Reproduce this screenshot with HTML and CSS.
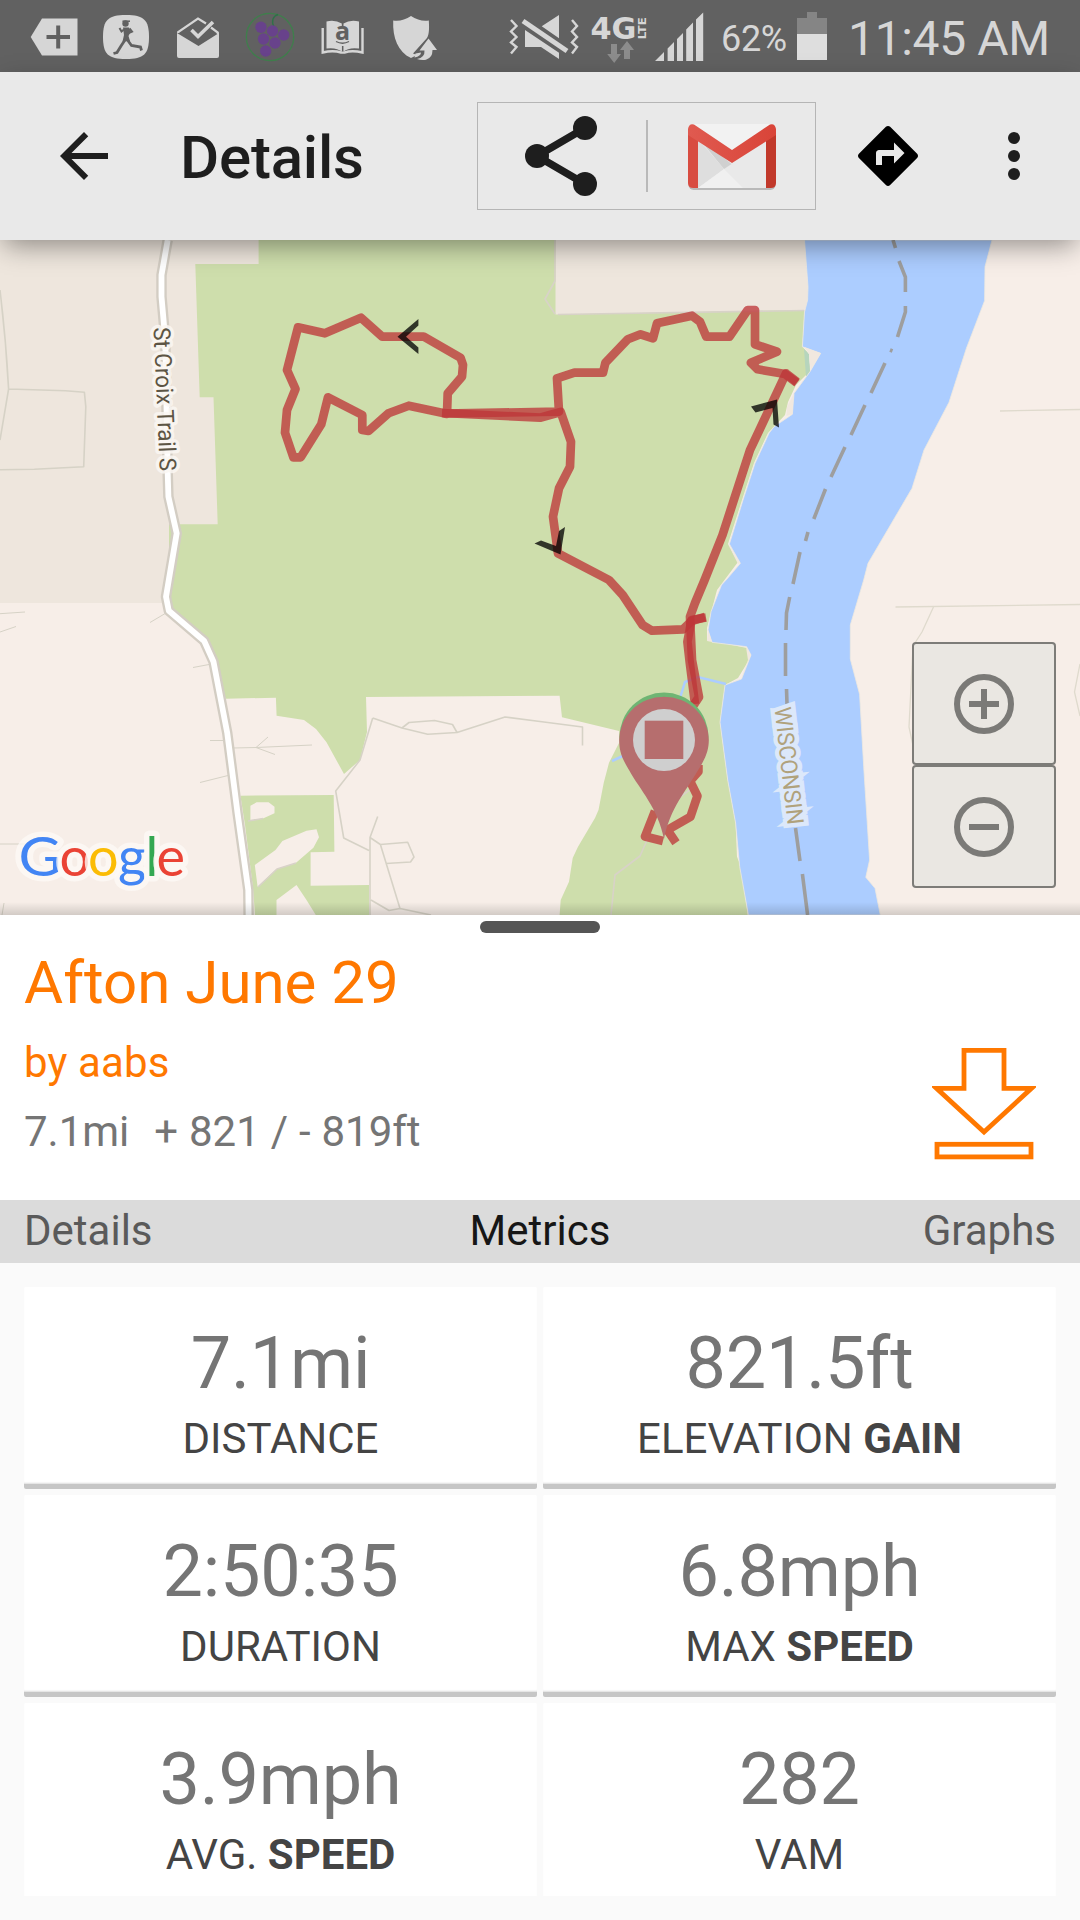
FILE: index.html
```html
<!DOCTYPE html>
<html lang="en">
<head>
<meta charset="utf-8">
<title>Afton June 29</title>
<link rel="stylesheet" href="styles.css">
</head>
<body>
<div class="screen">
  <header class="status">
    <svg class="s-tag" width="48" height="72" viewBox="30 0 48 72"><path fill="#d6d6d6" d="M30.700 37 42 18.500H77.500V55.500H42Z"/><path d="M46.500 37H70M58.200 25.500V48.500" stroke="#616161" stroke-width="4"/></svg>
    <svg class="s-run" width="47" height="72" viewBox="103 0 47 72"><path d="M126 15C144 15 149 20 149 37S144 59 126 59 103 54 103 37 108 15 126 15Z" fill="#d6d6d6"/><circle cx="125.500" cy="23.500" r="3.200" fill="#616161"/><path d="M122.500 21.200H130" stroke="#616161" stroke-width="1.500"/><path d="M123 27.500 129 27.500 130.500 32 128.500 36 130 41 122.500 41.500 124 35Z" fill="#616161"/><path d="M124 29.500 121.500 31.500 119.500 28M129.500 28.500 132 31.500 127.500 33.500" fill="none" stroke="#616161" stroke-width="2"/><path d="M125 40 121 46 117 52.500 113.500 53.500M127.500 40 131.500 45.500 140.500 47 141.500 50.500" fill="none" stroke="#616161" stroke-width="2.800"/></svg>
    <svg class="s-inbox" width="43" height="72" viewBox="177 0 43 72"><path d="M178.200 33V32L198 18.500 206 23.500M211 27.500 217.800 32.500V34" fill="none" stroke="#d6d6d6" stroke-width="2.200"/><path d="M177 33 198.500 46 219 33V56Q219 58 217 58H179Q177 58 177 56Z" fill="#d6d6d6"/><path d="M191.500 30 198 36.500 213 22" fill="none" stroke="#d6d6d6" stroke-width="3.600"/></svg>
    <svg class="s-grape" width="50" height="72" viewBox="245 0 50 72"><circle cx="270" cy="37" r="23.700" fill="none" stroke="#3f7f4c" stroke-width="1.300"/><path d="M274 27C271 21 273 16 278 14.500" fill="none" stroke="#2f7149" stroke-width="1.400"/><g fill="#68428b"><circle cx="261" cy="27.300" r="5.700"/><circle cx="272.500" cy="31" r="5.700"/><circle cx="283.700" cy="35" r="5.700"/><circle cx="263.500" cy="39" r="5.700"/><circle cx="275" cy="43" r="5.700"/><circle cx="265.700" cy="51" r="5.700"/></g></svg>
    <svg class="s-book" width="44" height="72" viewBox="321 0 44 72"><path d="M322.700 28V52.500Q333 50 341 52.500H344.500Q352 50 362.500 52.500V28" fill="none" stroke="#d6d6d6" stroke-width="2.400"/><path d="M326.500 21.500Q335 19.500 341.800 23.500V26H343.500V23.500Q350 19.500 359 21.500V48.500Q349 47 342.700 52 336 47 326.500 48.500Z" fill="#d6d6d6"/><path d="M342.700 46V51.500" stroke="#616161" stroke-width="1.500"/><text x="342.500" y="40" text-anchor="middle" class="amazon">a</text><path d="M336 41.500Q342.500 45 349 41.500" fill="none" stroke="#616161" stroke-width="1.300"/></svg>
    <svg class="s-shield" width="45" height="72" viewBox="393 0 45 72"><path d="M393.200 20.500Q402 22 411 16 420 22 428.800 20.500C429.300 28 429.300 34 427 38L413 53.500 417 55 411 58C398 52 392.500 38 393.200 20.500Z" fill="#d6d6d6"/><path d="M417 59Q421 60.300 426 59.700 432.500 58 432.500 50H437L428.500 38.500 419.500 50.500H424.500Q425 57.500 417 59ZM415.500 53.500 421 52.500Q421 56 414.500 57.500Z" fill="#d6d6d6"/></svg>
    <svg class="s-mute" width="70" height="72" viewBox="509 0 70 72"><g fill="none" stroke="#d6d6d6" stroke-width="2.400"><path d="M511 20 516.500 26 511 31.500 516.500 37 511 42.500 516.500 47 511 53.500M572 20 577 26 572 31.500 577 37 572 42.500 577 47 572 53.500"/></g><path d="M525 30V47H541L559 59V52.800ZM559 15V38.300L541.700 26.300Z" fill="#d6d6d6"/><path d="M523 21 567 51" stroke="#d6d6d6" stroke-width="5"/></svg>
    <svg class="s-4g" width="56" height="72" viewBox="591 0 56 72"><text class="fourg" x="590.500" y="39" textLength="46" lengthAdjust="spacingAndGlyphs">4G</text><text class="lte" transform="translate(645.500 39.500) rotate(-90)" textLength="22.500" lengthAdjust="spacingAndGlyphs">LTE</text><path fill="#8c8c8c" d="M611 44H617V54H621L614.200 63 607.200 54H611ZM624 59V50H620L627 41 634 50H630V59Z"/></svg>
    <svg class="s-signal" width="49" height="72" viewBox="655 0 49 72"><path fill="#d6d6d6" d="M655 61 664 52V61ZM667.600 48.500 674 42V61H667.600ZM677 39 683 33V61H677ZM686.200 29.500 693 22.500V61H686.200ZM696 19.500 703.200 12.500V61H696Z"/></svg>
    <span class="percent">62%</span>
    <svg class="s-batt" width="31" height="72" viewBox="797 0 31 72"><path fill="#858585" d="M807 12H817V18H827V60H797V18H807Z"/><path fill="#dedede" d="M797 34H827V60H797Z"/></svg>
    <span class="time">11:45 AM</span>
  </header>

  <nav class="appbar">
    <svg class="back" width="72" height="72" viewBox="0 0 24 24"><path fill="#1e1e1e" d="M20 11H7.830l5.590-5.590L12 4l-8 8 8 8 1.410-1.410L7.830 13H20v-2z"/></svg>
    <h1 class="bar-title">Details</h1>
    <div class="share-box">
      <svg width="168" height="106" viewBox="478 103 168 106"><path d="M585 128 537 156 585 184" fill="none" stroke="#1e1e1e" stroke-width="7.500"/><g fill="#1e1e1e"><circle cx="537" cy="156" r="12"/><circle cx="585" cy="128" r="12"/><circle cx="585" cy="184" r="12"/></g></svg>
      <i class="share-divider"></i>
      <svg width="167" height="106" viewBox="648 103 167 106">
        <defs><linearGradient id="red" x1="0" x2="1"><stop offset="0" stop-color="#e05a50"/><stop offset="1" stop-color="#d94438"/></linearGradient></defs>
        <rect x="688.500" y="126" width="87" height="64" rx="5" fill="#b9b9b9"/>
        <rect x="688" y="124" width="88" height="64" rx="5" fill="#e9e9e9"/>
        <path fill="#d0d0d0" d="M697 136 731.500 164 724 169Z"/><path fill="#dedede" d="M697 138 724 169 698 188Z"/><path fill="#f0f0f0" d="M698 188 724 169 743 188Z"/>
        <path fill="#f2f2f2" d="M692 124H772L732 153Z"/>
        <path fill="#d84c41" d="M688 130 698 138V188H693Q688 188 688 183Z"/><path fill="#c1392b" d="M776 130 766 138V188H771Q776 188 776 183Z"/>
        <path fill="url(#red)" d="M688 135V129Q689 123 694 124.500L732 150 770 124.500Q775 123 776 129V135L732 163Z"/>
      </svg>
    </div>
    <svg class="directions" width="72" height="72" viewBox="0 0 24 24"><path d="M21.710 11.290l-9-9c-.39-.39-1.020-.39-1.410 0l-9 9c-.39.39-.39 1.020 0 1.410l9 9c.39.39 1.020.39 1.410 0l9-9c.39-.38.39-1.010 0-1.410zM14 14.500V12h-4v3H8v-4c0-.55.45-1 1-1h5V7.500l3.500 3.500-3.500 3.500z"/></svg>
    <svg class="more" width="12" height="48" viewBox="0 0 12 48"><g fill="#1e1e1e"><circle cx="6" cy="6" r="6"/><circle cx="6" cy="24" r="6"/><circle cx="6" cy="42" r="6"/></g></svg>
  </nav>

  <main class="map">
    <svg class="map-art" width="1080" height="675" viewBox="0 240 1080 675">
      <rect y="240" width="1080" height="675" fill="#f7eee8"/>
      <!-- shaded land blocks -->
      <path fill="#eee6dd" d="M0 240H260V530H180L170 603H0ZM555 240H810V320H555Z"/>
      <!-- park -->
      <path fill="#cedeac" d="M258.600 240V264H195.300L199.700 397.300H213.500L217.700 524.300H169V545L169 610 205 640 213.500 662 225.600 698.700 275.900 697.700 276.600 715.700 304 720 316 729 326.500 742.300 344 774 360 760 367 732 366 697 559.600 695.700 562 717.300 619 731V743L609 762.700 603.700 783 598.500 810 595 818 578 846.700 572.700 858 569 881.700 560.700 900 559.600 915H747.700L741.500 868 737 856.700 735.600 823 727.700 780 720 722 725 685 738 678 749 660 747 648 707 640 707 628 717 590 738 562 728 544 742 500 754 463 768 433 785 415 788 402 796 385 810 371 808 353 802.400 346.700 804.500 310 555.500 314.500V240Z"/>
      <path fill="#cedeac" fill-rule="evenodd" d="M240.400 795.700 333.700 795 334.400 851.700 310.600 852.300V885.700L369 885V915H255L253 888 245 825ZM250.400 805.700V820.700L263.500 818.300 274.500 813.300V806.700L268.600 802.300H256.600ZM254.800 865 257.600 886.700 276.500 869 295.500 863.300 313.400 847.700 319 837.300 316.500 829.300 306.500 830.700 282.400 841 275.500 850ZM276.500 900V915H315.800L306.500 900 296.500 885Z"/>
      <!-- river and its banks -->
      <path fill="#b6d5bd" d="M804 349 809 354 810 372 806 377Z"/>
      <path fill="#accdff" stroke="#eee9df" stroke-width=".8" d="M804.500 240 808 286.700 807.600 300 804.500 312 802.400 346.700 820.700 353.300 810 371.700 794 393.300 792.400 414.300 774 426.700 769 433.300 755 463.300 743 500 729.400 544 740.400 563.300 727 579 721.500 585 711 611.700 708 630 712 642.300 746.600 646.700 751 655 741.500 679 725 685 720 722.300 727.700 780 735.600 823 739.700 866.700 748.400 915H880.300L875 888.300 865.800 877.300 869.600 860 863.700 766.700 859.600 694.300 850.300 659V625L863.700 580 868 563.300 912 488.300 924 450 949 402.300 966.400 348.300 984.600 300.700 985 266.700 992 240Z"/>
      <path fill="#f1e8df" d="M804 347 820.700 353.300 810.500 370 809 354ZM793.500 394 787 407 786.500 416 792.400 414ZM708 630 707 641 712 642ZM746 647 751 655 741 678 748 660ZM728 544 740 563 738 564Z"/>
      <path fill="none" stroke="#accdff" stroke-width="2.500" d="M726 684 698 677 685 682 680 698M612 761 625 755"/>
      <!-- small roads -->
      <g fill="none" stroke="#d6d2c6" stroke-width="1.600" stroke-linejoin="round">
        <path d="M0 290Q6 340 8.600 389L0 440M8.600 389 65.400 390.700 84.400 392.300 85.800 406.700 83.700 466.700 34.400 469.300 0 469.700"/>
        <path stroke-width="1" d="M0 613.700 25 612M0 632 16 626.500M150 622.500 166 613M193 667.500 209 664.500M210 740.500H225M200 782.500 228 775.500M233 748 256 747.500 312 745M268 737 256 747.500 275 754.500M0 844H26M4 903 2 915"/>
        <path d="M372.700 718 360 760 335.700 791 343.700 838 369 850.500M372.700 718 402 728 409 722.500 434.500 720.500 452.500 724.500 457 732.500 427.700 734.300 402 728M457 732.500 505 717 540 721.500 582.500 727V745.500M377.700 816.500 370 837.500 380.400 844.500 407.700 842.300 414 857 410.500 862 386 863.500M370 837.500V915M380.400 844.500 400 908.500 389 910.500 371 900M400 908.500 431 915"/>
        <path stroke="#d8d2c8" d="M555 240V281L545 299 555 314M248 821 263 818.500M258 887 277 869 296 863M558 314.500 804 310.500M648 838 640 856 615 875 611 915M695 786 680 797"/>
        <path stroke="#dfdacd" stroke-width="1.300" d="M1000 411 1080 409.500M895.500 607 1080 604.500M933.500 607 922 632 913 646 909 727 914 750M1080 664 1074.500 692 1080 716"/>
      </g>
      <path fill="none" stroke="#d3cdc3" stroke-width="10.500" stroke-linejoin="round" d="M167.700 240 161.500 275V296.700L165.300 340 167.700 473 168.400 496.700 176.700 533.300 168.800 580 166 596.700 168.800 610.700 204.200 641 213.500 661.700 227.300 733.300 237.600 813.300 248.300 890 248.600 915"/>
      <path fill="none" stroke="#fff" stroke-width="5.800" stroke-linejoin="round" d="M167.700 240 161.500 275V296.700L165.300 340 167.700 473 168.400 496.700 176.700 533.300 168.800 580 166 596.700 168.800 610.700 204.200 641 213.500 661.700 227.300 733.300 237.600 813.300 248.300 890 248.600 915"/>
      <text class="street" transform="translate(153.500 327.500) rotate(87.500)" textLength="144" lengthAdjust="spacingAndGlyphs">St Croix Trail S</text>
      <!-- state line -->
      <path fill="none" stroke="#9e9e9e" stroke-width="3.600" d="M893 240 895.500 248M899 261 905.400 277V292M905.400 306V312L897.500 337M890 350 892.500 351M885 363 871 393M865 405 851 435M845 447 831 477M825.500 489 813.800 519M808 532 805.500 541M800 552 793 584M789.700 597 786.500 613 786 630M785.500 643V676M786.500 689 787 704M795.500 828 800 861M802.400 874 807.600 915"/>
      <text class="state" transform="translate(774.500 708) rotate(83.600)" textLength="118" lengthAdjust="spacingAndGlyphs">WISCONSIN</text>
      <!-- recorded track -->
      <g fill="none" stroke="#bd3537" stroke-opacity=".76" stroke-width="8.700" stroke-linejoin="round" stroke-linecap="butt">
        <path d="M676 842.700 667.400 830 690.500 816.700 697.400 796 690 781 698.400 771.700V765M663 841 645 836.500 655 811M693 706 699 697 692 660 690 616.700 695 603 704.600 580 722.500 535 750 450 786 373.300 797 382"/>
        <path d="M797 383 785 374 757.600 369.300 750.800 362.700 777 351.700 755 344.300V310H747.700L729.400 336.700H706.300L700 321.700 692 315.700 657 323.300 653 338.300 640.600 334.300 627.800 339.300 605.400 362.700 603 372.700H574.400L557 378.300 559 411.700 444.300 413.500 447 414 447.700 393.300 462 376.700 463 365 460.500 357.700 423.600 336.500 382.300 336.700 361 317.700 324.800 333.300 298 327.300 287 370 295.500 389 287 410 285 432.700 293.400 457.300H300.700L321.300 424.300 328 397.300 362.300 415V430L368.500 431 388.500 413.300 408.800 405.700 443 413"/>
        <path d="M442 413 540 417.700 560.700 412 571 441.700 570 466.700 559 488.300 553 516.700 558 553.300 609 580 622.700 595 642.600 625 652 630.700 683 629.300 691.500 621 705 617"/>
        <path d="M706 617.500 691.500 620 687.400 641.700 689.800 663 695 704"/>
      </g>
      <!-- direction arrows -->
      <g fill="#000" fill-opacity=".76"><path d="M397.500 336.700 418.400 319V325.500L406 336.700 418.400 347.500V354Z"/><path d="M777 399.500 751 406.500 755.500 412.500 772.500 408 773.500 424.500 779 427.500Z"/><path d="M560.500 554.500 534.500 543.500 541 540.500 556 546 559 531 565 527Z"/></g>
      <!-- start and finish pins -->
      <circle cx="664" cy="737" r="44.500" fill="#6fb573"/>
      <path fill="#b66e6e" d="M664 839C658 808 640 790 629 770 621 757 619.200 750 619.200 740A44.800 43.300 0 0 1 708.800 740C708.800 750 706 758 697 772 686 791 670 808 664 839Z"/>
      <circle cx="664" cy="740" r="31" fill="#cfcfcf"/><rect x="644.700" y="720.700" width="38.600" height="38.300" fill="#b66e6e"/>
      <!-- map attribution -->
      <g class="brand"><text x="18.500" y="876" fill="#4285f4" textLength="43" lengthAdjust="spacingAndGlyphs">G</text><text x="59.500" y="876" fill="#ea4335">o</text><text x="88" y="876" fill="#fbbc05">o</text><text x="118" y="876" fill="#4285f4">g</text><text x="145.500" y="876" fill="#34a853">l</text><text x="156.500" y="876" fill="#ea4335">e</text></g>
    </svg>
    <div class="zoom">
      <button class="zoom-btn" aria-label="Zoom in"><svg width="60" height="60" viewBox="0 0 60 60"><circle cx="30" cy="30" r="27"/><path d="M15 30H45M30 15V45"/></svg></button>
      <button class="zoom-btn" aria-label="Zoom out"><svg width="60" height="60" viewBox="0 0 60 60"><circle cx="30" cy="30" r="27"/><path d="M15 30H45"/></svg></button>
    </div>
  </main>

  <section class="summary">
    <i class="handle"></i>
    <div class="summary-row">
      <div>
        <h2 class="route-name">Afton June 29</h2>
        <p class="author">by aabs</p>
        <p class="stats"><span class="length">7.1mi&nbsp;</span> + 821 / - 819ft</p>
      </div>
      <svg class="download" width="104" height="112" viewBox="932 1048 104 112"><g fill="none" stroke="#ff7800" stroke-width="4.800"><path d="M964 1050.300H1004V1088.300H1031.500L984 1132 936.500 1088.300H964Z"/><rect x="937" y="1144.300" width="94" height="12.600"/></g></svg>
    </div>
  </section>

  <nav class="tabs"><span>Details</span><span class="active">Metrics</span><span>Graphs</span></nav>

  <section class="metrics">
    <div class="card"><div class="value">7.1mi</div><div class="label">DISTANCE</div></div>
    <div class="card"><div class="value">821.5ft</div><div class="label">ELEVATION <b>GAIN</b></div></div>
    <div class="card"><div class="value">2:50:35</div><div class="label">DURATION</div></div>
    <div class="card"><div class="value">6.8mph</div><div class="label">MAX <b>SPEED</b></div></div>
    <div class="card"><div class="value">3.9mph</div><div class="label">AVG. <b>SPEED</b></div></div>
    <div class="card"><div class="value">282</div><div class="label">VAM</div></div>
  </section>
</div>
</body>
</html>
```
FILE: styles.css
```css
* { box-sizing: border-box; margin: 0; padding: 0; }
body { font-family: Roboto, "Noto Sans", sans-serif; background: #fafafa; }
svg { display: block; flex: none; }
.screen { width: 1080px; height: 1920px; overflow: hidden; display: flex; flex-direction: column; }

.status { height: 72px; flex: none; background: #616161; color: #d6d6d6; display: flex; padding-left: 30px; white-space: nowrap; }
.status svg { overflow: visible; }
.s-run { margin-left: 25px; }
.s-inbox { margin-left: 27px; }
.s-grape { margin-left: 25px; }
.s-book { margin-left: 26px; }
.s-shield { margin-left: 28px; }
.s-mute { margin-left: 71px; }
.s-4g { margin-left: 12px; }
.s-signal { margin-left: 8px; }
.percent { width: 76px; margin-left: 17px; font-size: 36px; line-height: 79px; letter-spacing: -.3px; }
.time { margin-left: 20px; font-size: 48px; line-height: 78px; letter-spacing: -.35px; }
.amazon { font: bold 25px "Open Sans", sans-serif; fill: #616161; }
.fourg { font: bold 30px "DejaVu Sans", sans-serif; fill: #d6d6d6; }
.lte { font: bold 11px "DejaVu Sans", sans-serif; fill: #d6d6d6; }

.appbar { position: relative; z-index: 1; height: 168px; flex: none; background: #e9e9e9; display: flex; align-items: center; padding-left: 48px; box-shadow: 0 9px 26px -4px rgba(0, 0, 0, .42); }
.bar-title { width: 297px; padding-left: 60px; font-size: 60px; font-weight: 500; line-height: 72px; color: #1e1e1e; padding-top: 4px; letter-spacing: -.2px; }
.share-box { display: flex; align-items: center; margin-left: 60px; width: 339px; height: 108px; border: 1px solid #b5b5b5; }
.share-divider { width: 2px; height: 72px; background: #b9b9b9; }
.directions { margin-left: 36px; }
.more { margin-left: 84px; }

.map { position: relative; height: 675px; flex: none; overflow: hidden; }
.map::after { content: ""; position: absolute; left: 0; right: 0; bottom: 0; height: 13px; background: linear-gradient(transparent, rgba(0, 0, 0, .15)); }
.street { font-size: 23.5px; fill: #5d5544; stroke: #fbf7f3; stroke-opacity: .85; stroke-width: 7px; stroke-linejoin: round; paint-order: stroke; }
.state { font-size: 23px; fill: #b0a27c; stroke: #dce8fa; stroke-width: 9px; stroke-linejoin: miter; paint-order: stroke; }
.brand { font: 54px Lato, sans-serif; stroke: #fcf9f5; stroke-opacity: .8; stroke-width: 11px; stroke-linejoin: round; paint-order: stroke; }
.zoom { position: absolute; left: 912px; top: 402px; width: 144px; height: 246px; display: flex; flex-direction: column; }
.zoom-btn { flex: 1; display: flex; align-items: center; justify-content: center; background: #eae7e2; border: 2px solid #7d7c78; border-radius: 4px; }
.zoom-btn svg { fill: none; stroke: #7b7a77; stroke-width: 6; }

.summary { height: 285px; flex: none; background: #fff; padding: 6px 24px 0; color: #ff7800; }
.handle { display: block; width: 120px; height: 12px; margin: 0 auto; border-radius: 6px; background: #555; }
.summary-row { display: flex; justify-content: space-between; }
.route-name { margin-top: 15px; font-size: 60px; line-height: 70px; font-weight: 400; }
.author { margin-top: 20px; font-size: 42px; line-height: 50px; letter-spacing: .15px; }
.stats { margin-top: 19px; font-size: 42px; line-height: 50px; color: #757575; word-spacing: .5px; }
.length { margin-right: 3px; }
.download { margin: 115px 20px 0 0; }

.tabs { height: 63px; flex: none; background: #dbdbdb; display: grid; grid-template-columns: 1fr 1fr 1fr; padding: 0 24px; font-size: 42px; line-height: 61px; color: #5a5a5a; text-align: center; }
.tabs span:first-child { text-align: left; }
.tabs span:last-child { text-align: right; }
.tabs .active { color: #161616; }

.metrics { margin-top: 24px; height: 609px; overflow: hidden; flex: none; padding: 0 24px; display: grid; grid-template-columns: 513px 513px; grid-auto-rows: 202px; gap: 6px; }
.card { background: #fff; border-bottom: 5px solid #c6c6c6; border-radius: 2px; text-align: center; box-shadow: inset 0 -2px 2px -1px #ddd; }
.value { padding-top: 35px; font-size: 72px; line-height: 84px; color: #757575; letter-spacing: -.2px; }
.label { padding-top: 8px; font-size: 42px; line-height: 50px; color: #444; }
```
